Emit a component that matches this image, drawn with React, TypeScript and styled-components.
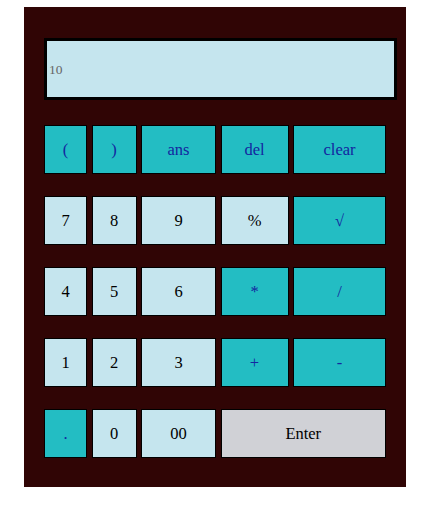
import React from "react";
import styled, { createGlobalStyle } from "styled-components";

const Global = createGlobalStyle`
  html, body { margin: 0; padding: 0; background: #ffffff; }
  body { font-family: "Liberation Serif", "DejaVu Serif", serif; }
`;

const Calculator = styled.div`
  box-sizing: border-box;
  margin: 7px 0 0 24px;
  width: 382px;
  height: 480px;
  background: #300505;
  padding: 31px 9px 0 20px;
  display: flex;
  flex-direction: column;
`;

const Display = styled.div`
  box-sizing: border-box;
  width: 353px;
  height: 62px;
  border: 3px solid #000;
  background: #c5e5ee;
  display: flex;
  align-items: center;
  padding: 2px 0 0 2px;
  font-family: "Liberation Serif", serif;
  font-size: 13.5px;
  color: #666666;
`;

const Keys = styled.div`
  margin-top: 25px;
  display: grid;
  grid-template-columns: 43px 45px 75px 68px 93px;
  grid-auto-rows: 49px;
  column-gap: 4.5px;
  row-gap: 22px;
`;

type Kind = "op" | "num" | "enter";

const Key = styled.button<{ $kind: Kind; $span?: number }>`
  box-sizing: border-box;
  margin: 0;
  padding: 0;
  border: 1px solid #000;
  grid-column: span ${(p) => p.$span ?? 1};
  font-family: "Liberation Serif", "DejaVu Serif", serif;
  font-size: 16.5px;
  display: flex;
  align-items: center;
  justify-content: center;
  background: ${(p) =>
    p.$kind === "op" ? "#23bdc3" : p.$kind === "enter" ? "#d0d1d6" : "#c5e5ee"};
  color: ${(p) => (p.$kind === "op" ? "#1426a0" : "#000")};
`;

const rows: { label: string; kind: Kind; span?: number }[][] = [
  [
    { label: "(", kind: "op" },
    { label: ")", kind: "op" },
    { label: "ans", kind: "op" },
    { label: "del", kind: "op" },
    { label: "clear", kind: "op" },
  ],
  [
    { label: "7", kind: "num" },
    { label: "8", kind: "num" },
    { label: "9", kind: "num" },
    { label: "%", kind: "num" },
    { label: "√", kind: "op" },
  ],
  [
    { label: "4", kind: "num" },
    { label: "5", kind: "num" },
    { label: "6", kind: "num" },
    { label: "*", kind: "op" },
    { label: "/", kind: "op" },
  ],
  [
    { label: "1", kind: "num" },
    { label: "2", kind: "num" },
    { label: "3", kind: "num" },
    { label: "+", kind: "op" },
    { label: "-", kind: "op" },
  ],
  [
    { label: ".", kind: "op" },
    { label: "0", kind: "num" },
    { label: "00", kind: "num" },
    { label: "Enter", kind: "enter", span: 2 },
  ],
];

export default function App() {
  return (
    <>
      <Global />
      <Calculator>
        <Display>10</Display>
        <Keys>
          {rows.flat().map((k, i) => (
            <Key key={i} $kind={k.kind} $span={k.span}>
              {k.label}
            </Key>
          ))}
        </Keys>
      </Calculator>
    </>
  );
}
